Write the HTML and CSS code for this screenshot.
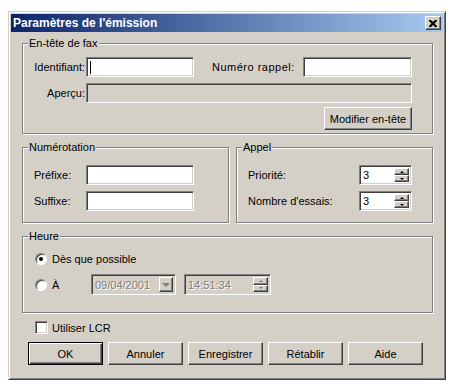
FILE: index.html
```html
<!DOCTYPE html>
<html lang="fr">
<head>
  <meta charset="UTF-8" />
  <title>Paramètres de l'émission</title>
  <link rel="stylesheet" href="styles.css">
</head>
<body>
  <div class="window">
    <div class="titlebar">
      <span class="title">Paramètres de l'émission</span>
      <div class="close-btn">
        <svg width="8" height="7" viewBox="0 0 8 7">
          <path d="M0 0h2l2 2 2-2h2v1l-2.5 2.5L8 6v1H6L4 5 2 7H0V6l2.5-2.5L0 1z" fill="#000"/>
        </svg>
      </div>
    </div>

    <div class="content">
      <!-- En-tête -->
      <div class="group group-fax">
        <span class="group-title">En-tête de fax</span>
        <div class="row">
          <span class="lbl lbl-fax">Identifiant:</span>
          <div class="edit edit-id"><span class="caret"></span></div>
          <span class="lbl lbl-rappel">Numéro rappel:</span>
          <div class="edit edit-rappel"></div>
        </div>
        <div class="row row-apercu">
          <span class="lbl lbl-fax">Aperçu:</span>
          <div class="edit edit-apercu disabled"></div>
        </div>
        <div class="row row-modifier">
          <div class="btn btn-modifier">Modifier en-tête</div>
        </div>
      </div>

      <div class="groups-mid">
        <!-- Numérotation -->
        <div class="group group-num">
          <span class="group-title">Numérotation</span>
          <div class="row">
            <span class="lbl lbl-num">Préfixe:</span>
            <div class="edit edit-num"></div>
          </div>
          <div class="row row-second">
            <span class="lbl lbl-num">Suffixe:</span>
            <div class="edit edit-num"></div>
          </div>
        </div>

        <!-- Appel -->
        <div class="group group-appel">
          <span class="group-title">Appel</span>
          <div class="row">
            <span class="lbl lbl-appel">Priorité:</span>
            <div class="edit spin">
              <span class="spin-val">3</span>
              <div class="spin-btns">
                <div class="spin-btn"><span class="arrow-up"></span></div>
                <div class="spin-btn"><span class="arrow-down"></span></div>
              </div>
            </div>
          </div>
          <div class="row row-second">
            <span class="lbl lbl-appel">Nombre d'essais:</span>
            <div class="edit spin">
              <span class="spin-val">3</span>
              <div class="spin-btns">
                <div class="spin-btn"><span class="arrow-up"></span></div>
                <div class="spin-btn"><span class="arrow-down"></span></div>
              </div>
            </div>
          </div>
        </div>
      </div>

      <!-- Heure -->
      <div class="group group-heure">
        <span class="group-title">Heure</span>
        <div class="row row-radio">
          <span class="radio checked"></span>
          <span class="radio-text">Dès que possible</span>
        </div>
        <div class="row row-radio2">
          <span class="radio"></span>
          <span class="radio-text radio-a">À</span>
          <div class="edit date disabled">
            <span class="dis-text">09/04/2001</span>
            <div class="drop-btn"><span class="arrow-down big dis"></span></div>
          </div>
          <div class="edit time disabled">
            <span class="dis-text">14:51:34</span>
            <div class="spin-btns">
              <div class="spin-btn"><span class="arrow-up dis"></span></div>
              <div class="spin-btn"><span class="arrow-down dis"></span></div>
            </div>
          </div>
        </div>
      </div>

      <div class="row row-check">
        <span class="checkbox"></span>
        <span class="check-text">Utiliser LCR</span>
      </div>

      <div class="row row-buttons">
        <div class="btn btn-default">OK</div>
        <div class="btn">Annuler</div>
        <div class="btn">Enregistrer</div>
        <div class="btn">Rétablir</div>
        <div class="btn">Aide</div>
      </div>
    </div>
  </div>
</body>
</html>
```

FILE: styles.css
```css
body {
  margin: 0;
  background: #fff;
  font-family: 'Liberation Sans', Arial, sans-serif;
  font-size: 11px;
  color: #000;
}

.window {
  margin: 11px 0 0 8px;
  width: 438px;
  height: 369px;
  box-sizing: border-box;
  padding: 2px;
  background: #d4d0c8;
  border: 1px solid;
  border-color: #d4d0c8 #404040 #404040 #d4d0c8;
  box-shadow: inset 1px 1px 0 #fff, inset -1px -1px 0 #808080;
}

.titlebar {
  height: 18px;
  display: flex;
  align-items: center;
  justify-content: space-between;
  padding-left: 2px;
  background: linear-gradient(90deg, #0a246a, #a6caf0);
}
.title {
  color: #fff;
  font-weight: bold;
  font-size: 12px;
}
.close-btn {
  width: 16px;
  height: 14px;
  margin-right: 2px;
  box-sizing: border-box;
  display: flex;
  align-items: center;
  justify-content: center;
  background: #d4d0c8;
  border: 1px solid;
  border-color: #fff #404040 #404040 #fff;
  box-shadow: inset -1px -1px 0 #808080;
}

.content {
  padding: 11px 0 0 11px;
}

/* group boxes */
.group {
  position: relative;
  box-sizing: border-box;
  border: 1px solid #808080;
  box-shadow: inset 1px 1px 0 #fff, 1px 1px 0 #fff;
}
.group-title {
  position: absolute;
  top: -7px;
  left: 5px;
  padding: 0 1px;
  line-height: 13px;
  background: #d4d0c8;
}
.group-fax {
  width: 411px;
  padding: 13px 0 3px;
}
.groups-mid {
  display: flex;
  gap: 7px;
  margin-top: 13px;
}
.group-num {
  width: 207px;
  padding: 17px 0 11px 11px;
}
.group-appel {
  width: 197px;
  padding: 17px 0 11px 11px;
}
.group-heure {
  width: 411px;
  margin-top: 13px;
  padding: 15px 0 17px 12px;
}

.row {
  display: flex;
  align-items: center;
}
.row-apercu { margin-top: 6px; }
.row-modifier {
  margin-top: 4px;
  justify-content: flex-end;
  padding-right: 20px;
}
.row-second { margin-top: 6px; }

.lbl { white-space: nowrap; }
.lbl-fax { width: 62px; text-align: right; margin-right: 1px; }
.lbl-rappel {
  width: 91px;
  margin-left: 18px;
  letter-spacing: 0.5px;
}
.lbl-num { width: 52px; }
.lbl-appel { width: 111px; }

/* sunken edit fields */
.edit {
  box-sizing: border-box;
  height: 20px;
  background: #fff;
  border: 1px solid;
  border-color: #808080 #fff #fff #808080;
  box-shadow: inset 1px 1px 0 #404040, inset -1px -1px 0 #d4d0c8;
  display: flex;
  align-items: center;
}
.edit.disabled { background: #d4d0c8; }
.edit-id { width: 108px; padding-left: 3px; }
.edit-rappel { width: 109px; }
.edit-apercu { width: 326px; }
.edit-num { width: 108px; }
.caret {
  width: 1px;
  height: 13px;
  background: #000;
}

/* spinners */
.spin {
  width: 53px;
  padding: 2px;
  justify-content: space-between;
}
.spin-val { padding-left: 1px; }
.spin-btns {
  display: flex;
  flex-direction: column;
  width: 15px;
  height: 100%;
}
.spin-btn {
  flex: 1;
  box-sizing: border-box;
  background: #d4d0c8;
  border: 1px solid;
  border-color: #fff #404040 #404040 #fff;
  box-shadow: inset -1px -1px 0 #808080;
  display: flex;
  align-items: center;
  justify-content: center;
}
.arrow-up, .arrow-down {
  width: 0;
  height: 0;
  border-left: 2px solid transparent;
  border-right: 2px solid transparent;
}
.arrow-up { border-bottom: 2px solid #000; }
.arrow-down { border-top: 2px solid #000; }
.arrow-up.dis { border-bottom-color: #808080; }
.arrow-down.dis { border-top-color: #808080; }
.arrow-down.big {
  border-left-width: 4px;
  border-right-width: 4px;
  border-top-width: 4px;
}

/* radios */
.row-radio { height: 14px; }
.row-radio2 { margin-top: 8px; }
.radio {
  position: relative;
  width: 12px;
  height: 12px;
  box-sizing: border-box;
  border-radius: 50%;
  background: #fff;
  border: 1px solid;
  border-color: #808080 #fff #fff #808080;
  box-shadow: inset 1px 1px 0 #404040;
}
.radio.checked::after {
  content: "";
  position: absolute;
  left: 3px;
  top: 3px;
  width: 4px;
  height: 4px;
  border-radius: 50%;
  background: #000;
}
.radio-text { margin-left: 5px; }
.radio-a { width: 39px; }

.date {
  width: 85px;
  height: 21px;
  padding: 2px;
  justify-content: space-between;
}
.time {
  width: 87px;
  height: 21px;
  margin-left: 8px;
  padding: 2px;
  justify-content: space-between;
}
.dis-text {
  padding-left: 1px;
  color: #808080;
  text-shadow: 1px 1px 0 #fff;
}
.drop-btn {
  width: 14px;
  height: 100%;
  box-sizing: border-box;
  border: 1px solid;
  border-color: #fff #404040 #404040 #fff;
  box-shadow: inset -1px -1px 0 #808080;
  display: flex;
  align-items: center;
  justify-content: center;
}

/* checkbox */
.row-check {
  margin: 8px 0 0 13px;
}
.checkbox {
  width: 13px;
  height: 13px;
  box-sizing: border-box;
  background: #fff;
  border: 1px solid;
  border-color: #808080 #fff #fff #808080;
  box-shadow: inset 1px 1px 0 #404040, inset -1px -1px 0 #d4d0c8;
}
.check-text { margin-left: 4px; }

/* push buttons */
.row-buttons {
  margin: 8px 0 0 6px;
  gap: 5px;
}
.btn {
  width: 75px;
  height: 23px;
  box-sizing: border-box;
  display: flex;
  align-items: center;
  justify-content: center;
  background: #d4d0c8;
  border: 1px solid;
  border-color: #fff #404040 #404040 #fff;
  box-shadow: inset -1px -1px 0 #808080;
}
.btn-modifier { width: 88px; }
.btn-default {
  border-color: #000;
  box-shadow: inset 1px 1px 0 #fff, inset -1px -1px 0 #404040, inset -2px -2px 0 #808080;
}
```
